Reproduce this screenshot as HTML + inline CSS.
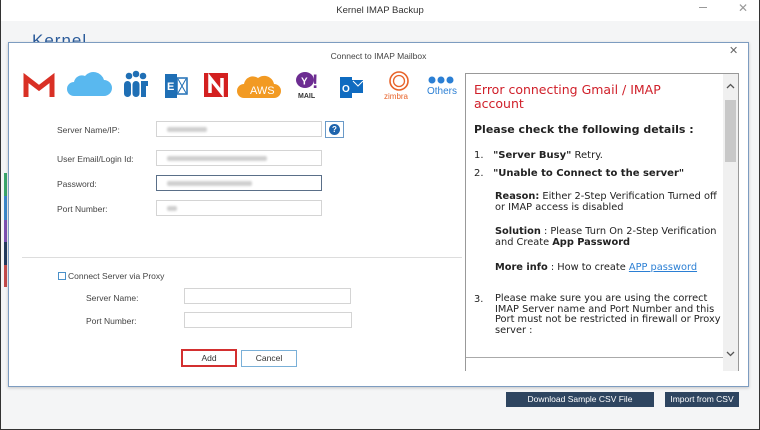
<!DOCTYPE html>
<html><head><meta charset="utf-8"><style>
*{box-sizing:border-box;margin:0;padding:0}
body{width:760px;height:430px;position:relative;overflow:hidden;background:#f4f5f6;font-family:"Liberation Sans",sans-serif;font-size:9px;color:#333}
.abs{position:absolute}
.inp{position:absolute;height:16px;border:1px solid #d4d4d4;background:#fff}
.blur{position:absolute;top:5px;left:10px;height:5px;background:#d0d0d0;border-radius:2px;filter:blur(1px)}
.lbl{position:absolute;font-size:8.5px;color:#444}
.p{font-family:"DejaVu Sans",sans-serif;font-size:10px;color:#222;position:absolute;left:0;line-height:11px}
</style></head><body>
<div class="abs" style="left:0;top:0;width:760px;height:430px;border:1px solid #333;border-top:none"></div>
<div class="abs" style="left:1px;top:0;width:758px;height:21px;background:#fff"></div>
<div class="abs" style="left:0;top:5px;width:760px;text-align:center;font-size:9.5px;color:#333">Kernel IMAP Backup</div>
<div class="abs" style="left:699px;top:7px;width:8px;height:1px;background:#999"></div>
<div class="abs" style="left:738px;top:1px;font-size:12px;color:#999">✕</div>
<div class="abs" style="left:32px;top:31px;font-size:17px;color:#2b5b9a;letter-spacing:1px;height:11px;overflow:hidden">Kernel</div>
<div class="abs" style="left:4px;top:173px;width:3px;height:23px;background:#3aa56b"></div>
<div class="abs" style="left:4px;top:196px;width:3px;height:24px;background:#3a86c8"></div>
<div class="abs" style="left:4px;top:220px;width:3px;height:22px;background:#7b4fb0"></div>
<div class="abs" style="left:4px;top:242px;width:3px;height:23px;background:#243a5e"></div>
<div class="abs" style="left:4px;top:265px;width:3px;height:22px;background:#c24a4a"></div>

<div class="abs" style="left:8px;top:42px;width:741px;height:345px;background:#fff;border:1px solid #7d9cc0;box-shadow:0 1px 3px rgba(0,0,0,.2)"></div>
<div class="abs" style="left:8px;top:51px;width:741px;text-align:center;font-size:8.5px;color:#444">Connect to IMAP Mailbox</div>
<div class="abs" style="left:729px;top:44px;font-size:11px;color:#666">✕</div>

<!-- icons -->
<svg class="abs" style="left:22px;top:68px" width="420" height="34" viewBox="0 0 420 34">
<path d="M4 29V10l13 10 13-10v19" fill="none" stroke="#d93025" stroke-width="5"/>
<path d="M52 28h30a8 8 0 0 0 0-16 11 11 0 0 0-19-4 8 8 0 0 0-11 6 7 7 0 0 0 0 14z" fill="#59b8ef"/>
<g fill="#1f6fb5"><circle cx="107" cy="8" r="3.3"/><circle cx="114" cy="6" r="3.3"/><circle cx="121" cy="8" r="3.3"/><rect x="102" y="13" width="7" height="16" rx="3.5"/><rect x="110.5" y="13" width="7" height="16" rx="3.5"/><path d="M119 13h7v5h-2v11h-5z"/></g>
<rect x="143" y="6" width="12" height="24" fill="#1f6fb5"/><text x="145" y="22" font-size="11" fill="#fff" font-family="Liberation Sans" font-weight="bold">E</text><rect x="155" y="10" width="10" height="16" fill="none" stroke="#1f6fb5" stroke-width="1.5"/><path d="M156 11l8 14M164 11l-8 14" stroke="#1f6fb5"/>
<rect x="182" y="5" width="24" height="24" fill="#d32020"/><path d="M188 25V10l12 15V10" fill="none" stroke="#fff" stroke-width="3.5"/>
<path d="M222 30h30a7 7 0 0 0 0-14 10 10 0 0 0-16-6 9 9 0 0 0-14 6 7 7 0 0 0 0 14z" fill="#f29a23"/><text x="228" y="26" font-size="11" fill="#fff" font-family="Liberation Sans">AWS</text>
<ellipse cx="283" cy="12" rx="9" ry="8" fill="#6c2c91"/><text x="279" y="16.5" font-size="10" fill="#fff" font-weight="bold" font-family="Liberation Sans">Y</text><text x="290" y="20" font-size="19" fill="#6c2c91" font-weight="bold" font-family="Liberation Sans">!</text><text x="276" y="30" font-size="7" fill="#333" font-weight="bold" font-family="Liberation Sans">MAIL</text>
<rect x="318" y="9" width="12" height="21" fill="#0f6bc0"/><text x="320" y="24" font-size="10" fill="#fff" font-weight="bold" font-family="Liberation Sans">O</text><path d="M330 12h11v13h-11z" fill="#0f6bc0"/><path d="M331 13l5 5 5-5" stroke="#fff" fill="none"/>
<circle cx="377" cy="13" r="9" fill="none" stroke="#e8632a" stroke-width="1.6"/><circle cx="377" cy="13" r="5.5" fill="none" stroke="#e8632a" stroke-width="1.3"/><text x="362" y="31" font-size="8" fill="#e8632a" font-family="Liberation Sans">zimbra</text>
</svg>
<svg class="abs" style="left:426px;top:70px" width="36" height="32"><g fill="#2b7fd4"><circle cx="6" cy="10" r="3.5"/><circle cx="15" cy="10" r="3.5"/><circle cx="24" cy="10" r="3.5"/></g><text x="1" y="24" font-size="10" fill="#2b7fd4" font-family="Liberation Sans">Others</text></svg>

<div class="lbl" style="left:57px;top:125px">Server Name/IP:</div>
<div class="inp" style="left:156px;top:121px;width:166px"><div class="blur" style="width:40px"></div></div>
<div class="abs" style="left:325px;top:121px;width:19px;height:17px;border:1px solid #6a9ac8;background:#fff"><div style="width:11px;height:11px;border-radius:50%;background:#1d64ad;color:#fff;font-size:8px;font-weight:bold;text-align:center;line-height:11px;margin:2px 3px">?</div></div>
<div class="lbl" style="left:57px;top:154px">User Email/Login Id:</div>
<div class="inp" style="left:156px;top:150px;width:166px"><div class="blur" style="width:100px"></div></div>
<div class="lbl" style="left:57px;top:179px">Password:</div>
<div class="inp" style="left:156px;top:175px;width:166px;border:1px solid #5a6f88"><div class="blur" style="width:85px"></div></div>
<div class="lbl" style="left:57px;top:204px">Port Number:</div>
<div class="inp" style="left:156px;top:200px;width:166px"><div class="blur" style="width:10px"></div></div>
<div class="abs" style="left:22px;top:257px;width:440px;height:1px;background:#ddd"></div>
<div class="abs" style="left:58px;top:272px;width:8px;height:8px;border:1px solid #4a90c9"></div>
<div class="lbl" style="left:68px;top:271px">Connect Server via Proxy</div>
<div class="lbl" style="left:86px;top:293px">Server Name:</div>
<div class="inp" style="left:184px;top:288px;width:167px"></div>
<div class="lbl" style="left:86px;top:316px">Port Number:</div>
<div class="inp" style="left:184px;top:312px;width:168px"></div>
<div class="abs" style="left:181px;top:349px;width:56px;height:18px;border:2px solid #d32f2f;background:#fff;text-align:center;line-height:14px;font-size:8.5px">Add</div>
<div class="abs" style="left:241px;top:350px;width:56px;height:17px;border:1px solid #7ab0d8;background:#fff;text-align:center;line-height:15px;font-size:8.5px">Cancel</div>

<!-- right panel -->
<div class="abs" style="left:465px;top:73px;width:274px;height:298px;border:1px solid #999;border-bottom:none;background:#fff;overflow:hidden">
 <div class="abs" style="left:8px;top:9px;width:215px;font-family:'DejaVu Sans',sans-serif;font-size:12.5px;color:#d0202a;line-height:14px">Error connecting Gmail / IMAP account</div>
 <div class="p" style="left:8px;top:50px;font-weight:bold;font-size:11px">Please check the following details :</div>
 <div class="p" style="left:8px;top:76px">1.&nbsp;&nbsp; <b>"Server Busy"</b> Retry.</div>
 <div class="p" style="left:8px;top:94px">2.&nbsp;&nbsp; <b>"Unable to Connect to the server"</b></div>
 <div class="p" style="left:29px;top:118px;width:232px;font-size:9.8px;line-height:10.5px"><b>Reason:</b> Either 2-Step Verification Turned off or IMAP access is disabled</div>
 <div class="p" style="left:29px;top:153px;width:232px;font-size:9.8px;line-height:10.5px"><b>Solution</b> : Please Turn On 2-Step Verification and Create <b>App Password</b></div>
 <div class="p" style="left:29px;top:188px;font-size:9.8px"><b>More info</b> : How to create <span style="color:#2b7fd4;text-decoration:underline">APP password</span></div>
 <div class="p" style="left:8px;top:220px;font-size:9.8px">3.</div>
 <div class="p" style="left:29px;top:220px;width:232px;font-size:9.8px;line-height:10.5px">Please make sure you are using the correct IMAP Server name and Port Number and this Port must not be restricted in firewall or Proxy server :</div>
 <div class="abs" style="left:0;top:283px;width:258px;height:1px;background:#aaa"></div>
 <div class="abs" style="left:257px;top:0;width:16px;height:298px;background:#f0f0f0"></div>
 <div class="abs" style="left:259px;top:26px;width:11px;height:62px;background:#c8c8c8"></div>
 <svg class="abs" style="left:259px;top:8px" width="11" height="8"><path d="M2 6l3.5-3.5L9 6" stroke="#555" stroke-width="1.3" fill="none"/></svg>
 <svg class="abs" style="left:259px;top:276px" width="11" height="8"><path d="M2 2l3.5 3.5L9 2" stroke="#555" stroke-width="1.3" fill="none"/></svg>
</div>

<div class="abs" style="left:506px;top:392px;width:148px;height:15px;background:#2e4560;color:#fff;font-size:8.5px;text-align:center;line-height:15px">Download Sample CSV File</div>
<div class="abs" style="left:665px;top:392px;width:74px;height:15px;background:#2e4560;color:#fff;font-size:8.5px;text-align:center;line-height:15px">Import from CSV</div>
</body></html>
